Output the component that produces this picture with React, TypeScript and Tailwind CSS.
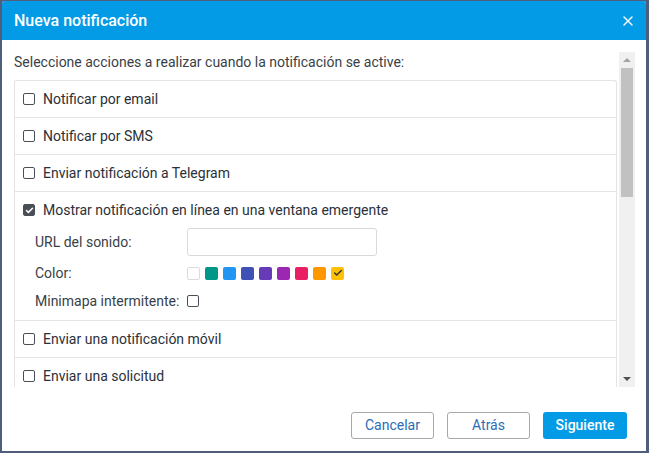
import { X, Check } from 'lucide-react';

const font = { fontFamily: 'Roboto, "Noto Sans", Arial, sans-serif' };

function Box({ checked = false }: { checked?: boolean }) {
  return (
    <span
      className={`flex h-[12px] w-[12px] shrink-0 items-center justify-center rounded-[2px] border-[1.5px] ${
        checked ? 'border-[#4a4f57] bg-[#4a4f57]' : 'border-[#4a4f57] bg-white'
      }`}
    >
      {checked && <Check className="h-[9px] w-[9px] text-white" strokeWidth={4} />}
    </span>
  );
}

function Row({ label, checked = false }: { label: string; checked?: boolean }) {
  return (
    <div className="flex h-[37px] items-center gap-[8px] border-b border-[#e4e4e4] pl-[8px]">
      <Box checked={checked} />
      <span className="text-[14px] text-[#2b3038]">{label}</span>
    </div>
  );
}

const swatches = [
  'bg-white border border-[#dcdcdc]',
  'bg-[#009688]',
  'bg-[#2196f3]',
  'bg-[#3f51b5]',
  'bg-[#673ab7]',
  'bg-[#9c27b0]',
  'bg-[#e91e63]',
  'bg-[#ff9800]',
  'bg-[#ffc107]',
];

export default function App() {
  return (
    <div className="h-[453px] w-[649px] bg-[#4e5e7c] pb-[2px] pl-[2px] pr-[3px] pt-px" style={font}>
      <div className="flex h-full flex-col overflow-hidden rounded-t-[3px] bg-white">
        {/* Header */}
        <div className="flex h-[39px] shrink-0 items-center justify-between bg-[#039be5] pl-3 pr-[10px]">
          <span className="text-[16px] font-medium text-white">Nueva notificación</span>
          <X className="h-[16px] w-[16px] text-white" strokeWidth={2} />
        </div>

        {/* Body */}
        <div className="flex h-[347px] shrink-0 pl-3 pr-[11px] pt-3">
          <div className="min-w-0 flex-1 overflow-hidden">
            <p className="h-[20px] text-[14px] leading-[20px] text-[#3a3f47]">
              Seleccione acciones a realizar cuando la notificación se active:
            </p>
            <div className="mt-2 rounded-t-[3px] border border-b-0 border-[#e4e4e4]">
              <Row label="Notificar por email" />
              <Row label="Notificar por SMS" />
              <Row label="Enviar notificación a Telegram" />
              <div className="border-b border-[#e4e4e4] pb-[7px]">
                <div className="flex h-[36px] items-center gap-[8px] pl-[8px]">
                  <Box checked />
                  <span className="text-[14px] text-[#2b3038]">
                    Mostrar notificación en línea en una ventana emergente
                  </span>
                </div>
                <div className="flex flex-col pl-[20px] text-[14px] text-[#3a3f47]">
                  <div className="flex h-[28px] items-center">
                    <span className="w-[152px]">URL del sonido:</span>
                    <span className="h-[28px] w-[190px] rounded-[3px] border border-[#d9d9d9] bg-white" />
                  </div>
                  <div className="mt-[5px] flex h-[24px] items-center">
                    <span className="w-[152px]">Color:</span>
                    <div className="flex gap-[5px]">
                      {swatches.map((s, i) => (
                        <span key={i} className={`flex h-[13px] w-[13px] items-center justify-center rounded-[2px] ${s}`}>
                          {i === swatches.length - 1 && (
                            <Check className="h-[10px] w-[10px] text-[#333]" strokeWidth={3.5} />
                          )}
                        </span>
                      ))}
                    </div>
                  </div>
                  <div className="mt-[4px] flex h-[24px] items-center">
                    <span className="w-[152px]">Minimapa intermitente:</span>
                    <Box />
                  </div>
                </div>
              </div>
              <Row label="Enviar una notificación móvil" />
              <Row label="Enviar una solicitud" />
            </div>
          </div>

          {/* Scrollbar */}
          <div className="ml-[2px] flex w-[16px] shrink-0 flex-col bg-[#f0f0f0]">
            <div className="flex h-[16px] items-center justify-center">
              <span className="h-0 w-0 border-x-[4px] border-b-[4px] border-x-transparent border-b-[#a3a3a3]" />
            </div>
            <div className="mx-[2px] h-[129px] bg-[#c1c1c1]" />
            <div className="flex-1" />
            <div className="flex h-[16px] items-center justify-center">
              <span className="h-0 w-0 border-x-[4px] border-t-[4px] border-x-transparent border-t-[#505050]" />
            </div>
          </div>
        </div>

        {/* Footer */}
        <div className="flex flex-1 items-start justify-end gap-[13px] pr-[19px] pt-[25px]">
          <button className="h-[27px] w-[83px] rounded-[3px] border border-[#a8a8a8] bg-white text-[14px] text-[#2a6db5]">
            Cancelar
          </button>
          <button className="h-[27px] w-[83px] rounded-[3px] border border-[#a8a8a8] bg-white text-[14px] text-[#2a6db5]">
            Atrás
          </button>
          <button className="h-[27px] w-[84px] rounded-[3px] bg-[#039be5] text-[14px] font-medium text-white">
            Siguiente
          </button>
        </div>
      </div>
    </div>
  );
}
